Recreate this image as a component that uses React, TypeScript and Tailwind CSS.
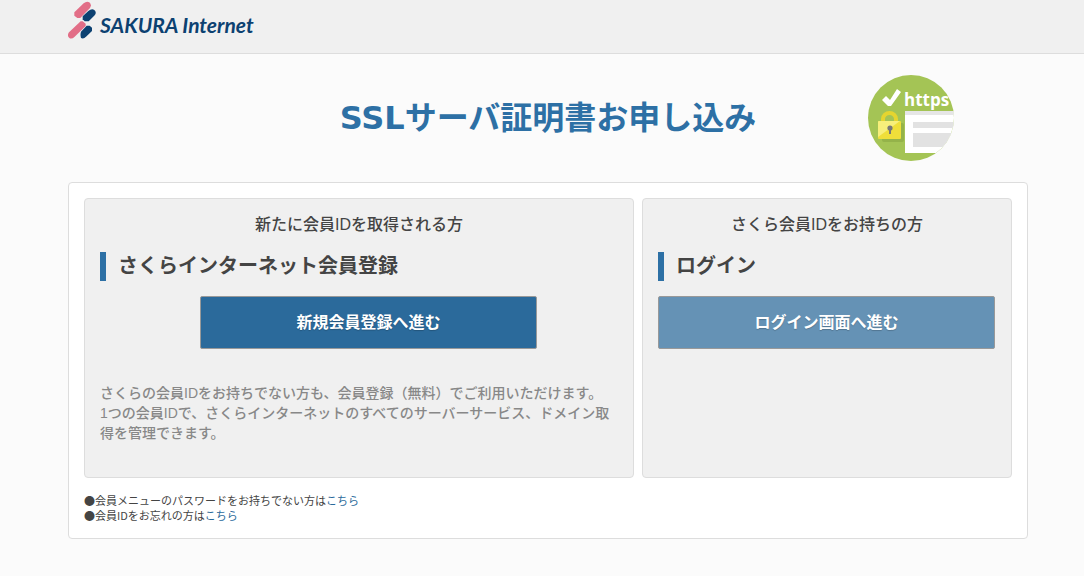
import type { ReactNode } from "react"

const JA = "font-['Liberation_Sans','Noto_Sans_CJK_JP',sans-serif]"

const LogoMark = () => (
    <svg viewBox="24 4 84 114" className="h-[38px] w-7" aria-hidden="true">
        <g fill="#e26e87">
            <path d="M43 38 L71 11 Q80 3 88 8 Q96 15 90 25 L61 55 L52 55 L43 48Z" />
            <path d="M62 65 H68 L77 72 V79 L44 111 Q35 120 28 115 Q20 108 27 98Z" />
        </g>
        <g fill="#0c4171">
            <path d="M68 59 V50 L85 34 Q95 26 103 31 Q111 38 104 47 L86 65 H74Z" />
            <path d="M80 78 H89 L96 84 V94 L78 111 Q71 119 63 115 Q60 105 63 96Z" />
        </g>
    </svg>
)

const HttpsBadge = () => (
    <svg viewBox="0 0 87 87" className="size-[87px]" role="img" aria-label="https">
        <defs>
            <clipPath id="badge">
                <circle cx="43" cy="43" r="43" />
            </clipPath>
        </defs>
        <g clipPath="url(#badge)">
            <rect width="87" height="87" fill="#a4c455" />
            <path d="M14 25 L18 21 L22 25 L29 14 L33 17 L23 31 L20 31Z" fill="#fff" />
            <text
                x="36"
                y="31"
                fill="#fff"
                fontSize="17"
                fontWeight="700"
                fontFamily="Open Sans, sans-serif"
            >
                https
            </text>
            <rect x="37" y="36" width="50" height="42" fill="#fff" />
            <rect x="37" y="36" width="50" height="4" fill="#e6e6e6" />
            <rect x="45" y="47" width="42" height="6" fill="#e2e2e2" />
            <rect x="45" y="58" width="42" height="14" fill="#e2e2e2" />
            <rect x="14" y="48" width="22" height="19" rx="2" fill="#94b34a" />
            <path
                d="M15 47 V44 a6.5 6 0 0 1 13 0 V47"
                fill="none"
                stroke="#e5d52f"
                strokeWidth="4"
            />
            <rect x="10" y="46" width="23" height="18" rx="1" fill="#efdf3a" />
            <path d="M10 47 Q10 46 11 46 H32 L10 62Z" fill="#f7ef7b" />
            <circle cx="22" cy="53" r="2.6" fill="#777" />
            <rect x="21" y="53" width="2" height="6" fill="#777" />
        </g>
    </svg>
)

const Card = ({ lead, title, children }: { lead: string; title: string; children: ReactNode }) => (
    <section className="rounded border border-[#dddddd] bg-[#f0f0f0] p-[15px]">
        <p className="text-center font-medium text-base leading-[22px]">{lead}</p>
        <h2 className="mt-4 border-[#2d70a5] border-l-6 pl-3 font-bold text-xl leading-[29px]">
            {title}
        </h2>
        {children}
    </section>
)

export default function App() {
    return (
        <div className={`min-h-screen bg-[#fbfbfb] text-[#444444] ${JA}`}>
            <header className="border-[#dddddd] border-b bg-[#f0f0f0] pr-14 pl-[68px]">
                <a href="#top" className="flex h-[53px] items-start gap-1 pt-px text-[#0c4171]">
                    <LogoMark />
                    <span className="pt-2 font-['Lato'] font-bold text-[21px] italic leading-8">
                        SAKURA Internet
                    </span>
                </a>
            </header>

            <main className="pr-14 pl-[68px]">
                <div className="grid h-32 grid-cols-[1fr_auto_1fr] items-center">
                    <h1 className="col-start-2 font-['DejaVu_Sans','Noto_Sans_CJK_JP',sans-serif] font-bold text-[#2d70a5] text-[32px] leading-10">
                        SSLサーバ証明書お申し込み
                    </h1>
                    <div className="mr-[73px] justify-self-end">
                        <HttpsBadge />
                    </div>
                </div>

                <div className="rounded border border-[#dddddd] bg-white p-[15px]">
                    <div className="grid grid-cols-[55fr_37fr] gap-2">
                        <Card lead="新たに会員IDを取得される方" title="さくらインターネット会員登録">
                            <button
                                type="button"
                                className="mt-[15px] ml-[100px] h-[53px] w-[337px] rounded-xs border border-[#999999] bg-[#2b6a9b] font-bold text-base text-white text-shadow-xs"
                            >
                                新規会員登録へ進む
                            </button>
                            <p className="mt-[34px] mb-[19px] font-medium text-[#888888] text-sm leading-5">
                                さくらの会員IDをお持ちでない方も、会員登録（無料）でご利用いただけます。
                                <br />
                                1つの会員IDで、さくらインターネットのすべてのサーバーサービス、ドメイン取得を管理できます。
                            </p>
                        </Card>
                        <Card lead="さくら会員IDをお持ちの方" title="ログイン">
                            <button
                                type="button"
                                className="mt-[15px] h-[53px] w-[337px] rounded-xs border border-[#999999] bg-[#6592b5] font-bold text-base text-white text-shadow-xs"
                            >
                                ログイン画面へ進む
                            </button>
                        </Card>
                    </div>

                    <ul className="mt-[15px] font-['Noto_Sans_CJK_JP',sans-serif] text-[11px] leading-[15px]">
                        <li>
                            ●会員メニューのパスワードをお持ちでない方は
                            <a href="#password" className="text-[#2b6a9b]">
                                こちら
                            </a>
                        </li>
                        <li>
                            ●会員IDをお忘れの方は
                            <a href="#member-id" className="text-[#2b6a9b]">
                                こちら
                            </a>
                        </li>
                    </ul>
                </div>
            </main>
        </div>
    )
}
